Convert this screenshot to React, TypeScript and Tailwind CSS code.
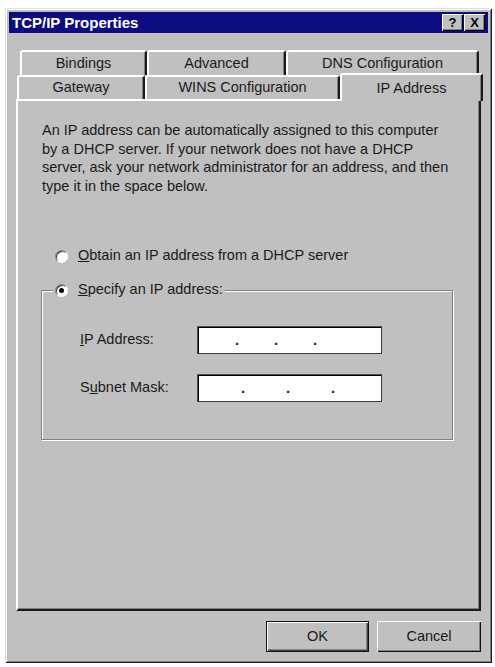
import React from "react";

const TABS_BACK = [
  { label: "Bindings", w: "w-[127px]" },
  { label: "Advanced", w: "w-[139px]" },
  { label: "DNS Configuration", w: "w-[193px]" },
];

function Tab({ label, w }: { label: string; w: string }) {
  return (
    <div
      className={`${w} h-full flex items-center justify-center rounded-t-[3px] border-t-2 border-l-2 border-r-2 border-t-white border-l-white border-r-[#1a1a1a] shadow-[inset_-1px_0_#808080]`}
    >
      {label}
    </div>
  );
}

function Radio({ checked }: { checked?: boolean }) {
  return (
    <span className="w-[13px] h-[13px] shrink-0 rounded-full bg-white border border-t-[#808080] border-l-[#808080] border-b-white border-r-white shadow-[inset_1px_1px_#3a3a3a] flex items-center justify-center">
      {checked && <span className="w-[5px] h-[5px] rounded-full bg-black" />}
    </span>
  );
}

function IpField({ seg }: { seg: string }) {
  return (
    <div className="w-[185px] h-[28px] bg-white border border-t-[#505050] border-l-[#505050] border-b-[#3c3c3c] border-r-[#3c3c3c] shadow-[inset_1px_1px_#000] flex items-center pl-[1px] text-[15px] font-bold text-[#222]">
      <span className={seg} />
      <span className="w-[3px] text-center">.</span>
      <span className={seg} />
      <span className="w-[3px] text-center">.</span>
      <span className={seg} />
      <span className="w-[3px] text-center">.</span>
    </div>
  );
}

function Button({ children, isDefault }: { children: React.ReactNode; isDefault?: boolean }) {
  return (
    <button
      className={`h-[31px] flex items-center justify-center bg-[#c0c0c0] text-[14.5px] ${
        isDefault
          ? "w-[103px] border border-[#111] shadow-[inset_1px_1px_#fff,inset_-1px_-1px_#444,inset_-2px_-2px_#808080]"
          : "w-[104px] shadow-[inset_1px_1px_#fff,inset_-1px_-1px_#111,inset_-2px_-2px_#808080]"
      }`}
    >
      {children}
    </button>
  );
}

export default function App() {
  return (
    <div className="min-h-screen bg-white pt-[8px] pl-[5px] font-['Liberation_Sans',Arial,sans-serif] text-[#1a1a1a]">
      <div className="w-[487px] h-[655px] bg-[#c0c0c0] p-[4px] flex flex-col shadow-[inset_1px_1px_#dfdfdf,inset_-1px_-1px_#1a1a1a,inset_2px_2px_#ffffff,inset_-2px_-2px_#808080]">
        {/* title bar */}
        <div className="h-[21px] bg-[#0c0c80] flex items-center pl-[3px] pr-[3px]">
          <span className="text-white font-bold text-[15px] leading-none flex-1">TCP/IP Properties</span>
          <div className="flex gap-[1px]">
            <span className="w-[21px] h-[17px] bg-[#c0c0c0] flex items-center justify-center text-[13px] font-bold leading-none text-black shadow-[inset_1px_1px_#fff,inset_-1px_-1px_#000,inset_-2px_-2px_#808080]">
              ?
            </span>
            <span className="w-[21px] h-[17px] bg-[#c0c0c0] flex items-center justify-center text-[13px] font-bold leading-none text-black shadow-[inset_1px_1px_#fff,inset_-1px_-1px_#000,inset_-2px_-2px_#808080]">
              X
            </span>
          </div>
        </div>

        {/* tabs */}
        <div className="mt-[17px] text-[14.5px]">
          <div className="flex h-[25px] ml-[11px]">
            {TABS_BACK.map((t) => (
              <Tab key={t.label} label={t.label} w={t.w} />
            ))}
          </div>
          <div className="flex h-[24px] ml-[8px] relative z-10">
            <Tab label="Gateway" w="w-[128px]" />
            <Tab label="WINS Configuration" w="w-[195px]" />
            <div className="w-[143px] h-[28px] -mt-[2px] bg-[#c0c0c0] flex items-start pt-[3px] justify-center rounded-t-[3px] border-t-2 border-l-2 border-r-2 border-t-white border-l-white border-r-[#1a1a1a] shadow-[inset_-1px_0_#808080]">
              IP Address
            </div>
          </div>
        </div>

        {/* panel */}
        <div className="mx-[7px] h-[512px] border-2 border-t-white border-l-white border-r-[#1a1a1a] border-b-[#1a1a1a] shadow-[inset_-1px_-1px_#808080] pl-[24px] pt-[20px] text-[14.5px]">
          <p className="leading-[18.5px] whitespace-nowrap">
            An IP address can be automatically assigned to this computer
            <br />
            by a DHCP server. If your network does not have a DHCP
            <br />
            server, ask your network administrator for an address, and then
            <br />
            type it in the space below.
          </p>

          <div className="mt-[52px] ml-[13px] h-[18px] flex items-center gap-[10px]">
            <Radio />
            <span>
              <span className="underline">O</span>btain an IP address from a DHCP server
            </span>
          </div>

          <div className="mt-[25px] -ml-[1px] w-[412px] h-[150px] border border-[#808080] shadow-[inset_1px_1px_#fff,1px_1px_#fff] pl-[38px]">
            <div className="relative -mt-[10px] -ml-[27px] w-fit h-[18px] px-[2px] bg-[#c0c0c0] flex items-center gap-[10px]">
              <Radio checked />
              <span>
                <span className="underline">S</span>pecify an IP address:
              </span>
            </div>

            <div className="mt-[27px] flex items-center">
              <span className="w-[117px]">
                <span className="underline">I</span>P Address:
              </span>
              <IpField seg="w-[36px]" />
            </div>
            <div className="mt-[20px] flex items-center">
              <span className="w-[117px]">
                S<span className="underline">u</span>bnet Mask:
              </span>
              <IpField seg="w-[42px]" />
            </div>
          </div>
        </div>

        {/* buttons */}
        <div className="mt-[10px] mr-[7px] flex justify-end gap-[8px]">
          <Button isDefault>OK</Button>
          <Button>Cancel</Button>
        </div>
      </div>
    </div>
  );
}
